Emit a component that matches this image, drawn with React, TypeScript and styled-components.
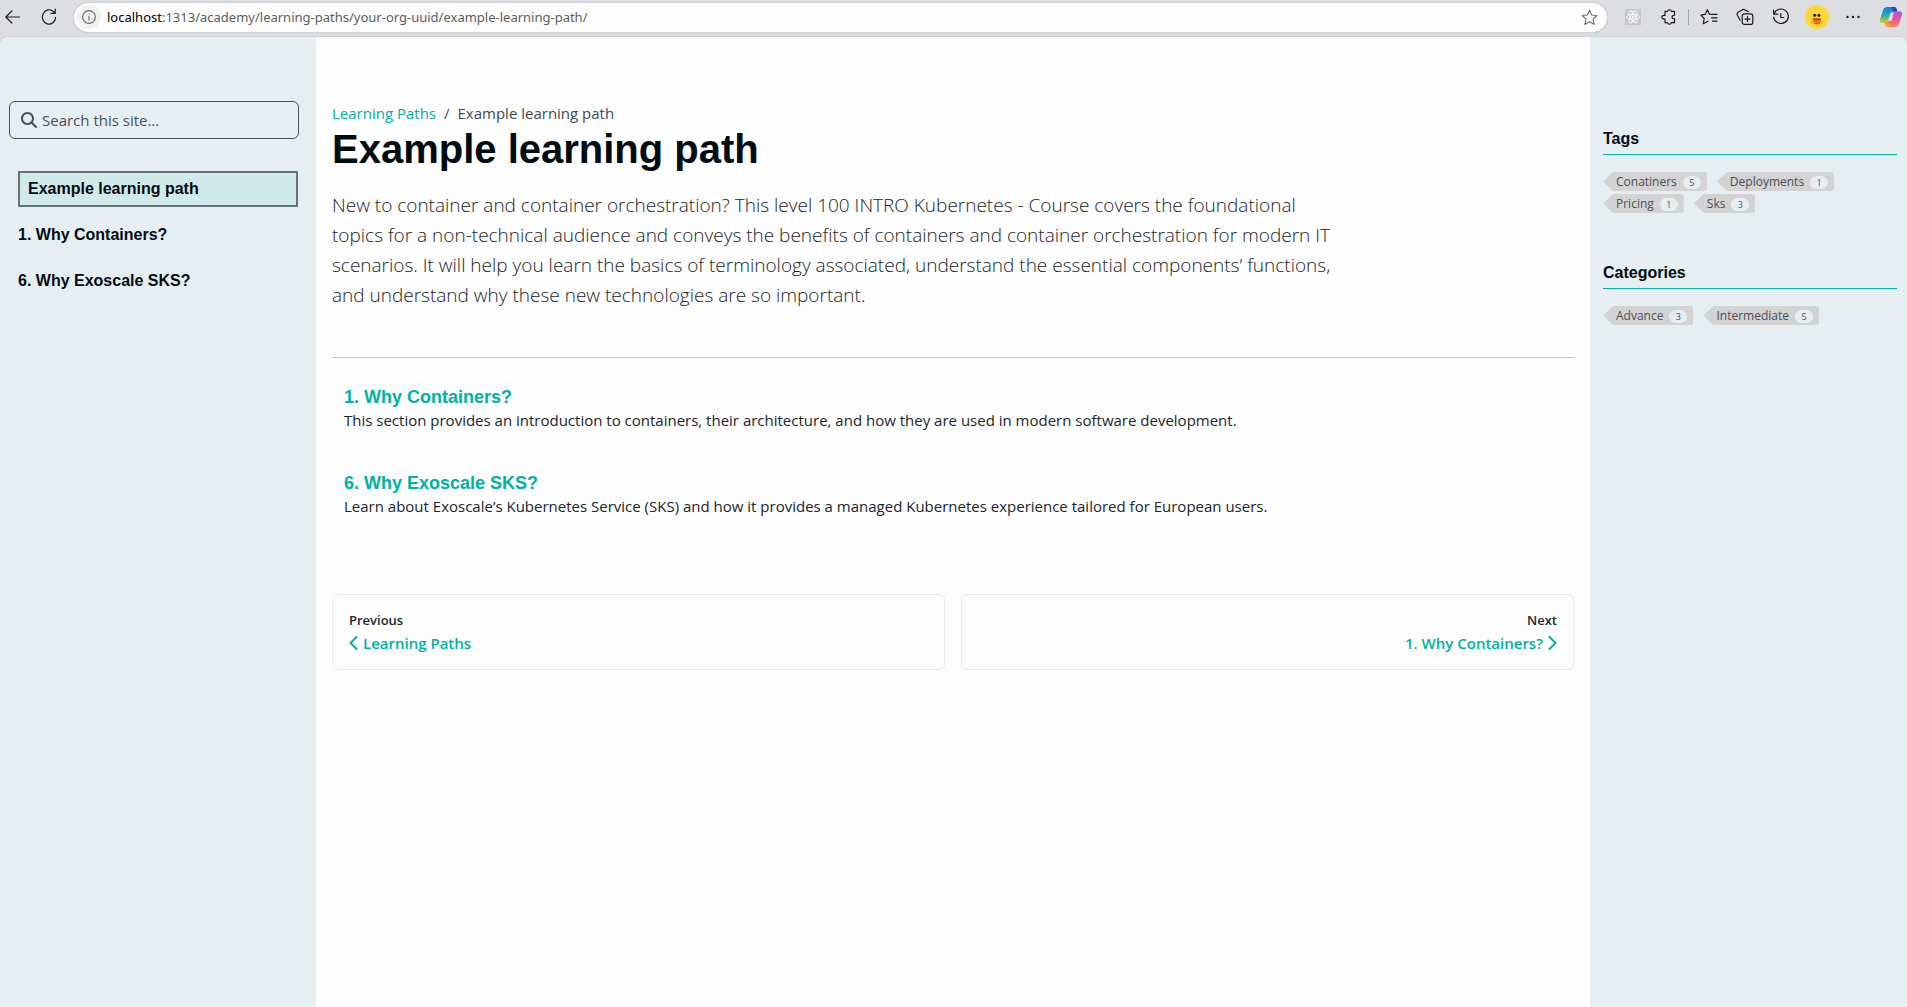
import React from "react";
import styled, { createGlobalStyle } from "styled-components";
import { FaMagnifyingGlass } from "react-icons/fa6";

const BODY_FONT = `"Segoe UI", "Open Sans", "Noto Sans", sans-serif`;
const WIDE_FONT = `"Segoe UI", "Noto Sans", "Open Sans", sans-serif`;
const HEAD_FONT = `Arial, "Liberation Sans", sans-serif`;
const TEAL = "#00b1a0";
const PANEL = "#e6eef1";

const GlobalStyle = createGlobalStyle`
  *, *::before, *::after { box-sizing: border-box; }
  body {
    margin: 0;
    background: #dddee2;
    color: #212529;
    font-family: ${BODY_FONT};
    font-size: 15px;
    line-height: 24px;
  }
  a { color: inherit; text-decoration: none; }
  h1, h2, p, ul { margin: 0; padding: 0; }
  ul { list-style: none; }
`;

const Window = styled.div`
  display: flex;
  flex-direction: column;
  min-height: 100vh;
`;

const Toolbar = styled.header`
  display: flex;
  align-items: center;
  height: 37px;
  padding: 0 0 3px 2px;
`;

const IconButton = styled.button<{ $width?: number; $muted?: boolean }>`
  display: flex;
  align-items: center;
  justify-content: center;
  flex: none;
  width: ${(p) => p.$width ?? 36}px;
  height: 32px;
  padding: 0;
  border: 0;
  background: none;
  color: ${(p) => (p.$muted ? "#6e6e6e" : "#1b1b1b")};
`;

const NavButtons = styled.div`
  display: flex;
  gap: 12px;
  padding-right: 11px;
`;

const AddressBar = styled.form`
  display: flex;
  align-items: center;
  flex: 1;
  height: 31px;
  padding: 0 2px 0 3px;
  border: 1px solid #d2d3d6;
  border-radius: 16px;
  background: #fdfdfd;
  font-family: ${WIDE_FONT};
  font-size: 13px;
  box-shadow: 0 0 1px #b8b9bd;
`;

const SiteInfo = styled.button`
  display: flex;
  align-items: center;
  justify-content: center;
  width: 24px;
  height: 24px;
  margin-right: 6px;
  padding: 0;
  border: 0;
  border-radius: 12px;
  background: #f1f1f2;
  color: #666;
`;

const Host = styled.label`
  color: #000;
`;

const AddressInput = styled.input`
  flex: 1;
  min-width: 0;
  padding: 0;
  border: 0;
  outline: 0;
  background: none;
  color: #5c5c5c;
  font: inherit;
`;

const Extensions = styled.div`
  display: flex;
  align-items: center;
  padding-left: 7px;
`;

const Separator = styled.span`
  width: 1px;
  height: 16px;
  margin: 0 2px 0 1px;
  background: #a6a7aa;
`;

const Page = styled.div`
  display: grid;
  grid-template-columns: 316px minmax(0, 1fr) 317px;
  flex: 1;
  overflow: hidden;
  border-radius: 8px 8px 0 0;
  background: #fdfdfd;
  box-shadow: 0 0 2px #b4b5b8;
`;

const Sidebar = styled.aside`
  padding: 64px 17px 0 9px;
  background: ${PANEL};
`;

const SearchBox = styled.label`
  display: flex;
  align-items: center;
  gap: 5px;
  height: 38px;
  padding: 0 12px 0 11px;
  border: 1px solid #495057;
  border-radius: 6px;
  color: #495057;
`;

const SearchInput = styled.input`
  flex: 1;
  min-width: 0;
  padding: 0;
  border: 0;
  outline: 0;
  background: none;
  color: inherit;
  font: inherit;
  &::placeholder { color: #495057; opacity: 1; }
`;

const SideNav = styled.ul`
  display: flex;
  flex-direction: column;
  gap: 10px;
  padding: 32px 1px 0 9px;
`;

const SideLink = styled.a<{ $active?: boolean }>`
  display: block;
  padding: ${(p) => (p.$active ? "4px 8px" : "6px 0")};
  border: ${(p) => (p.$active ? "2px solid #667378" : "0")};
  background: ${(p) => (p.$active ? "#d0eaea" : "none")};
  color: #000c12;
  font: bold 16px/24px ${HEAD_FONT};
`;

const Main = styled.main`
  padding: 64px 16px 0;
`;

const Crumbs = styled.ul`
  display: flex;
  gap: 8px;
  color: #414a50;
`;

const CrumbLink = styled.a`
  color: ${TEAL};
`;

const Title = styled.h1`
  color: #000c12;
  font: bold 40px/48px ${HEAD_FONT};
`;

const Lead = styled.p`
  max-width: 81%;
  padding-top: 17px;
  color: #212529;
  font-size: 19px;
  font-weight: 300;
  line-height: 30px;
`;

const Rule = styled.hr`
  height: 1px;
  margin: 47px 0 28px;
  border: 0;
  background: #c4c6c8;
`;

const Entries = styled.div`
  display: flex;
  flex-direction: column;
  gap: 40px;
  padding: 0 12px;
`;

const EntryTitle = styled.h2`
  color: ${TEAL};
  font: bold 18px/22px ${HEAD_FONT};
`;

const Pager = styled.nav`
  display: grid;
  grid-template-columns: 1fr 1fr;
  gap: 16px;
  padding-top: 76px;
`;

const PagerCard = styled.a<{ $end?: boolean }>`
  display: flex;
  flex-direction: column;
  align-items: ${(p) => (p.$end ? "flex-end" : "flex-start")};
  padding: 13px 16px 15px;
  border: 1px solid #ebecec;
  border-radius: 6px;
  font-weight: 600;
`;

const PagerLabel = styled.span`
  font-size: 13px;
`;

const PagerTarget = styled.span`
  display: flex;
  align-items: center;
  gap: 5px;
  line-height: 22px;
  color: ${TEAL};
`;

const Aside = styled.aside`
  display: flex;
  flex-direction: column;
  gap: 48px;
  padding: 90px 10px 0 13px;
  background: ${PANEL};
`;

const AsideTitle = styled.h2`
  padding-bottom: 3px;
  border-bottom: 1px solid ${TEAL};
  color: #000c12;
  font: bold 16px/24px ${HEAD_FONT};
`;

const TagList = styled.ul`
  display: flex;
  flex-wrap: wrap;
  gap: 3px 10px;
  padding: 17px 40px 0 0;
`;

const Tag = styled.a`
  display: flex;
  align-items: center;
  gap: 6px;
  height: 19px;
  padding: 1px 6px 0 13px;
  border-radius: 0 3px 3px 0;
  background: #d3d3d3;
  clip-path: polygon(0 50%, 10px 0, 100% 0, 100% 100%, 10px 100%);
  color: #495057;
  font-size: 12px;
`;

const Count = styled.span`
  width: 18px;
  height: 13px;
  margin-top: 1px;
  border-radius: 7px;
  background: ${PANEL};
  font-size: 9px;
  line-height: 13px;
  text-align: center;
`;

const Stroke = ({ size = 18, children }: { size?: number; children: React.ReactNode }) => (
  <svg width={size} height={size} viewBox="0 0 18 18" fill="none" stroke="currentColor" strokeWidth="1.2" strokeLinecap="round" strokeLinejoin="round" aria-hidden="true">
    {children}
  </svg>
);

const Chevron = ({ flip }: { flip?: boolean }) => (
  <svg width="9" height="14" viewBox="0 0 9 14" fill="none" stroke="currentColor" strokeWidth="2" strokeLinecap="round" strokeLinejoin="round" aria-hidden="true">
    <path d={flip ? "M1.500 1 7.500 7l-6 6" : "M7.500 1 1.500 7l6 6"} />
  </svg>
);

const BackIcon = () => (
  <Stroke><path d="M15.5 9H2.200M8 2.800 1.800 9 8 15.200" /></Stroke>
);
const ReloadIcon = () => (
  <Stroke><path d="M15.6 9.300A6.600 7.200 0 1 1 13.400 3.600L15 5.200M15.200 1.200V5.400H11" /></Stroke>
);
const InfoIcon = () => (
  <Stroke size={16}><circle cx="9" cy="9" r="7.2" /><path d="M9 8.300V12.400M9 5.500V5.700" /></Stroke>
);
const StarIcon = () => (
  <Stroke size={17}><path d="M9 1.200 11.300 6.300 16.800 6.900 12.700 10.700 13.900 16.300 9 13.500 4.100 16.300 5.300 10.700 1.200 6.900 6.700 6.300z" /></Stroke>
);
const PuzzleIcon = () => (
  <Stroke><path d="M5 3.300H7.500a2 2 0 0 1 3.900 0H14.500v4c-3.300-.6-3.300 4 0 3.400v4h-3.100a2 2 0 0 1-3.900 0H5v-3.700c-4.300.5-4.300-4.100 0-3.600z" /></Stroke>
);
const FavoritesIcon = () => (
  <Stroke><path d="M9.600 6.400 7.300 1.800 5.100 6.400.9 7.100l3.300 3.400-.9 5.200 4.700-2.500M11 6.400h6M11.500 9.800H17M12.500 13.200H17" /></Stroke>
);
const CollectionsIcon = () => (
  <Stroke><path d="M4 12 1.400 7.300a2.500 2.500 0 0 1 .8-3L6 2a2.500 2.500 0 0 1 3 0l3.200 1.600" /><rect x="6.2" y="5.8" width="10.6" height="10.6" rx="2.2" /><path d="M11.500 8.600v5M9 11.100h5" /></Stroke>
);
const HistoryIcon = () => (
  <Stroke><path d="M2 5.800A7.400 7.200 0 1 1 1.600 9M1.600 2v4.200h4.200M8.800 5.500v4h3" /></Stroke>
);
const MoreIcon = () => (
  <svg width="16" height="16" viewBox="0 0 16 16" fill="currentColor" aria-hidden="true">
    <circle cx="2.500" cy="8" r="1.200" /><circle cx="8" cy="8" r="1.200" /><circle cx="13.500" cy="8" r="1.200" />
  </svg>
);
const ReactBadge = () => (
  <svg width="16" height="16" viewBox="0 0 16 16" aria-hidden="true">
    <rect width="16" height="16" fill="#c6c7c9" />
    <g fill="none" stroke="#f6f6f7" strokeWidth="1">
      <ellipse cx="8" cy="8" rx="6.500" ry="2.600" />
      <ellipse cx="8" cy="8" rx="6.500" ry="2.600" transform="rotate(60 8 8)" />
      <ellipse cx="8" cy="8" rx="6.500" ry="2.600" transform="rotate(120 8 8)" />
    </g>
    <circle cx="8" cy="8" r="1.400" fill="#f6f6f7" />
  </svg>
);
const ProfileIcon = () => (
  <svg width="24" height="24" viewBox="0 0 24 24" aria-hidden="true">
    <circle cx="12" cy="12" r="12" fill="#fdd835" />
    <circle cx="9.700" cy="10.300" r="1.500" fill="#1d1a12" />
    <circle cx="13.900" cy="10.300" r="1.500" fill="#1d1a12" />
    <path d="M7.500 13h8.500v2l-1 4q-3 .8-6.200 0l-1.300-4z" fill="#f06a1c" />
    <path d="M8.500 14.500h6.600" stroke="#7c4a1c" />
    <path d="M6 17l1.500 1M17.700 17l-1.500 1" stroke="#b79522" />
  </svg>
);
const CopilotIcon = () => (
  <svg width="24" height="22" viewBox="0 0 24 22" overflow="visible" aria-hidden="true">
    <defs>
      <linearGradient id="cool" x1="0" y1="0" x2="0" y2="1">
        <stop offset="0" stopColor="#1a7fe0" /><stop offset=".5" stopColor="#22a3b8" /><stop offset=".8" stopColor="#8fc44a" /><stop offset="1" stopColor="#f0c02c" />
      </linearGradient>
      <linearGradient id="warm" x1="0" y1="0" x2="0" y2="1">
        <stop offset="0" stopColor="#a650e8" /><stop offset=".5" stopColor="#e8559a" /><stop offset="1" stopColor="#fb8c4a" />
      </linearGradient>
    </defs>
    <g transform="translate(2 0)">
      <path d="M8 1h7q2 0 2.600 2l.8 2.600h-2.200q-2 0-2.600 2L11 15q-.7 2-2.600 2H3Q.5 17 1 13.500L4 4q1-3 4-3z" fill="url(#cool)" />
      <path d="M12.500 1H15q2 0 2.600 2l.8 2.600h-4z" fill="#1d49b5" />
      <path d="M16 21H9q-2 0-2.600-2l-.8-2.600h2.200q2 0 2.600-2L13 7.500q.7-2 2.600-2H21q2.500 0 2 3.500L20 18q-1 3-4 3z" fill="url(#warm)" />
      <path d="M11.500 21H9q-2 0-2.600-2l-.8-2.600h4z" fill="#f5a13a" />
      <path d="M11.500 6.500h3.500L12.500 15H9z" fill="#dddee2" />
    </g>
  </svg>
);

const entries = [
  { title: "1. Why Containers?", text: "This section provides an introduction to containers, their architecture, and how they are used in modern software development." },
  { title: "6. Why Exoscale SKS?", text: "Learn about Exoscale’s Kubernetes Service (SKS) and how it provides a managed Kubernetes experience tailored for European users." },
];

const taxonomies: { name: string; terms: [string, number][] }[] = [
  { name: "Tags", terms: [["Conatiners", 5], ["Deployments", 1], ["Pricing", 1], ["Sks", 3]] },
  { name: "Categories", terms: [["Advance", 3], ["Intermediate", 5]] },
];

export default function App() {
  return (
    <Window>
      <GlobalStyle />
      <Toolbar>
        <NavButtons>
          <IconButton $width={22} aria-label="Back"><BackIcon /></IconButton>
          <IconButton $width={26} aria-label="Reload"><ReloadIcon /></IconButton>
        </NavButtons>
        <AddressBar onSubmit={(e) => e.preventDefault()}>
          <SiteInfo type="button" aria-label="Site information"><InfoIcon /></SiteInfo>
          <Host htmlFor="address">localhost</Host>
          <AddressInput id="address" defaultValue=":1313/academy/learning-paths/your-org-uuid/example-learning-path/" />
          <IconButton $width={32} $muted type="button" aria-label="Add to favorites"><StarIcon /></IconButton>
        </AddressBar>
        <Extensions>
          <IconButton aria-label="React tools"><ReactBadge /></IconButton>
          <IconButton aria-label="Extensions"><PuzzleIcon /></IconButton>
          <Separator />
          <IconButton aria-label="Favorites"><FavoritesIcon /></IconButton>
          <IconButton aria-label="Collections"><CollectionsIcon /></IconButton>
          <IconButton aria-label="History"><HistoryIcon /></IconButton>
          <IconButton aria-label="Profile"><ProfileIcon /></IconButton>
          <IconButton aria-label="More"><MoreIcon /></IconButton>
          <IconButton aria-label="Copilot"><CopilotIcon /></IconButton>
        </Extensions>
      </Toolbar>
      <Page>
        <Sidebar>
          <SearchBox>
            <FaMagnifyingGlass size={16} aria-hidden="true" />
            <SearchInput type="search" placeholder="Search this site…" aria-label="Search this site" />
          </SearchBox>
          <SideNav>
            <li><SideLink href="#" $active>Example learning path</SideLink></li>
            {entries.map((e) => (
              <li key={e.title}><SideLink href="#">{e.title}</SideLink></li>
            ))}
          </SideNav>
        </Sidebar>
        <Main>
          <Crumbs>
            <li><CrumbLink href="#">Learning Paths</CrumbLink></li>
            <li>/</li>
            <li>Example learning path</li>
          </Crumbs>
          <Title>Example learning path</Title>
          <Lead>
            New to container and container orchestration? This level 100 INTRO Kubernetes - Course covers the foundational
            topics for a non-technical audience and conveys the benefits of containers and container orchestration for modern IT
            scenarios. It will help you learn the basics of terminology associated, understand the essential components’ functions,
            and understand why these new technologies are so important.
          </Lead>
          <Rule />
          <Entries>
            {entries.map((e) => (
              <section key={e.title}>
                <EntryTitle><a href="#">{e.title}</a></EntryTitle>
                <p>{e.text}</p>
              </section>
            ))}
          </Entries>
          <Pager>
            <PagerCard href="#">
              <PagerLabel>Previous</PagerLabel>
              <PagerTarget><Chevron />Learning Paths</PagerTarget>
            </PagerCard>
            <PagerCard href="#" $end>
              <PagerLabel>Next</PagerLabel>
              <PagerTarget>1. Why Containers?<Chevron flip /></PagerTarget>
            </PagerCard>
          </Pager>
        </Main>
        <Aside>
          {taxonomies.map((t) => (
            <section key={t.name}>
              <AsideTitle>{t.name}</AsideTitle>
              <TagList>
                {t.terms.map(([name, count]) => (
                  <li key={name}><Tag href="#">{name}<Count>{count}</Count></Tag></li>
                ))}
              </TagList>
            </section>
          ))}
        </Aside>
      </Page>
    </Window>
  );
}
